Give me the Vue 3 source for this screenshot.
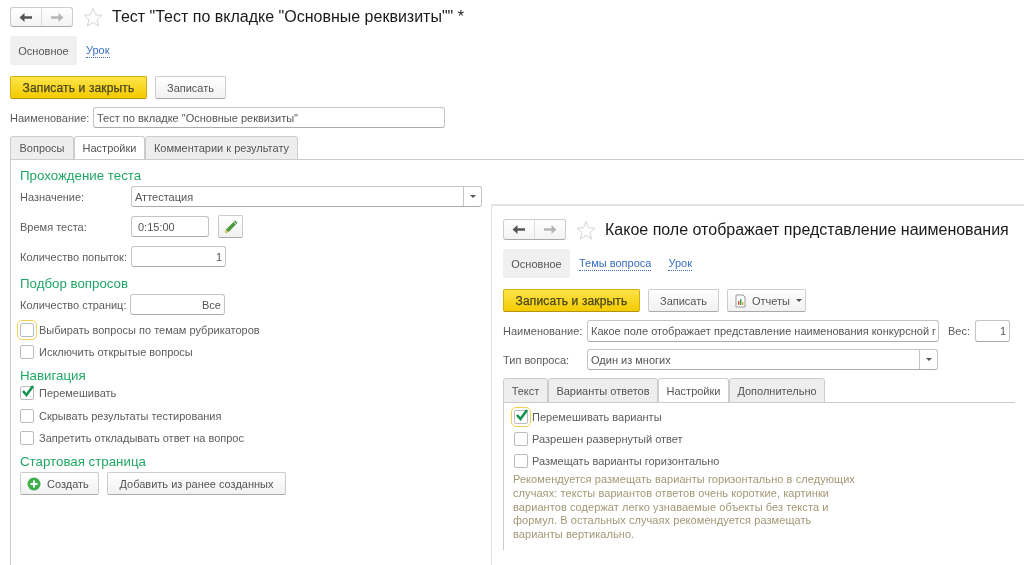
<script setup>
const Arrow = 'M0.5 5.5 5.5 1V4.3H13V6.7H5.5V10Z'
const Star = 'M10 1.5 12.5 7.8 19 8.2 14 12.5 15.7 19 10 15.4 4.3 19 6 12.5 1 8.2 7.5 7.8Z'
const leftChecks = ['Скрывать результаты тестирования', 'Запретить откладывать ответ на вопрос']
const note = ['Рекомендуется размещать варианты горизонтально в следующих', 'случаях: тексты вариантов ответов очень короткие, картинки', 'вариантов содержат легко узнаваемые объекты без текста и', 'формул. В остальных случаях рекомендуется размещать', 'варианты вертикально.']
</script>

<template>
  <div class="desk">
    <section class="win left">
      <header class="head">
        <div class="nav">
          <span class="nav-cell"><svg width="14" height="11" viewBox="0 0 14 11"><path :d="Arrow" fill="#555" /></svg></span>
          <span class="nav-cell"><svg class="flip" width="14" height="11" viewBox="0 0 14 11"><path :d="Arrow" fill="#b5b5b5" /></svg></span>
        </div>
        <svg class="star" width="20" height="20" viewBox="0 0 20 20"><path :d="Star" fill="#fff" stroke="#d4d4d4" /></svg>
        <h1 class="title">Тест "Тест по вкладке "Основные реквизиты"" *</h1>
      </header>
      <nav class="pages">
        <span class="page-cur">Основное</span>
        <a class="link">Урок</a>
      </nav>
      <div class="toolbar">
        <button class="btn primary w137">Записать и закрыть</button>
        <button class="btn w71">Записать</button>
      </div>
      <div class="row name-row">
        <label class="name-label">Наименование:</label>
        <div class="input w352">Тест по вкладке "Основные реквизиты"</div>
      </div>
      <div class="tabs">
        <span class="tab w64">Вопросы</span>
        <span class="tab on w71">Настройки</span>
        <span class="tab w153">Комментарии к результату</span>
      </div>
      <div class="panel">
        <h2 class="group">Прохождение теста</h2>
        <div class="row mt2"><label class="lab">Назначение:</label>
          <div class="input combo w351"><span class="combo-text">Аттестация</span><span class="drop"><i class="caret" /></span></div>
        </div>
        <div class="row mt9"><label class="lab">Время теста:</label>
          <div class="input w78 time">0:15:00</div>
          <button class="btn icon-btn">
            <svg width="16" height="16" viewBox="0 0 16 16"><path d="M2 14 3 10.5 10.5 3 13 5.5 5.5 13Z" fill="#4f9a3a" /><path d="M2 14 3 10.5 5.5 13Z" fill="#e8c65a" /><path d="M11 2.5 12 1.6 14.4 4 13.5 5Z" fill="#2f7d2a" /></svg>
          </button>
        </div>
        <div class="row mt9"><label class="lab">Количество попыток:</label><div class="input w95 num">1</div></div>
        <h2 class="group mt7">Подбор вопросов</h2>
        <div class="row mt2"><label class="lab narrow">Количество страниц:</label><div class="input w95 num">Все</div></div>
        <div class="checks mt5">
          <label class="check"><i class="box focus" />Выбирать вопросы по темам рубрикаторов</label>
          <label class="check"><i class="box" />Исключить открытые вопросы</label>
        </div>
        <h2 class="group mt4 mb-1">Навигация</h2>
        <div class="checks wide">
          <label class="check"><i class="box"><svg class="tick" width="16" height="15" viewBox="0 0 16 15"><path d="M3 7 6.5 11 13 2" fill="none" stroke="#12934f" stroke-width="2.6" /></svg></i>Перемешивать</label>
          <label v-for="c in leftChecks" :key="c" class="check"><i class="box" />{{ c }}</label>
        </div>
        <h2 class="group mt4">Стартовая страница</h2>
        <div class="actions">
          <button class="btn w79 create">
            <svg width="14" height="14" viewBox="0 0 14 14"><circle cx="7" cy="7" r="6.5" fill="#3fae4a" /><path d="M7 3.5V10.5M3.5 7H10.5" stroke="#fff" stroke-width="2" /></svg>
            Создать
          </button>
          <button class="btn w179">Добавить из ранее созданных</button>
        </div>
      </div>
    </section>

    <section class="win right">
      <header class="head tall">
        <div class="nav">
          <span class="nav-cell"><svg width="14" height="11" viewBox="0 0 14 11"><path :d="Arrow" fill="#555" /></svg></span>
          <span class="nav-cell"><svg class="flip" width="14" height="11" viewBox="0 0 14 11"><path :d="Arrow" fill="#b5b5b5" /></svg></span>
        </div>
        <svg class="star" width="20" height="20" viewBox="0 0 20 20"><path :d="Star" fill="#fff" stroke="#d4d4d4" /></svg>
        <h1 class="title">Какое поле отображает представление наименования</h1>
      </header>
      <nav class="pages">
        <span class="page-cur">Основное</span>
        <a class="link">Темы вопроса</a>
        <a class="link second">Урок</a>
      </nav>
      <div class="toolbar">
        <button class="btn primary w137">Записать и закрыть</button>
        <button class="btn w71">Записать</button>
        <button class="btn w79 reports">
          <svg width="13" height="14" viewBox="0 0 13 14"><path d="M2 1H9L11 3V13H2Z" fill="#fff" stroke="#999" /><path d="M4 11V7H5.4V11Z" fill="#d8503c" /><path d="M6 11V5H7.4V11Z" fill="#3fa24a" /><path d="M8 11V8H9.4V11Z" fill="#d8a83c" /></svg>
          Отчеты<i class="caret small" />
        </button>
      </div>
      <div class="row name-row r2">
        <label class="lab r-lab">Наименование:</label>
        <div class="input w352">Какое поле отображает представление наименования конкурсной г</div>
        <label class="weight">Вес:</label>
        <div class="input w35 num">1</div>
      </div>
      <div class="row mt7">
        <label class="lab r-lab">Тип вопроса:</label>
        <div class="input combo w351"><span class="combo-text">Один из многих</span><span class="drop"><i class="caret" /></span></div>
      </div>
      <div class="tabs r-tabs">
        <span class="tab w45">Текст</span>
        <span class="tab w110">Варианты ответов</span>
        <span class="tab on w71">Настройки</span>
        <span class="tab w96">Дополнительно</span>
      </div>
      <div class="panel r-panel">
        <div class="checks">
          <label class="check"><i class="box focus r-box"><svg class="tick" width="16" height="15" viewBox="0 0 16 15"><path d="M3 7 6.5 11 13 2" fill="none" stroke="#12934f" stroke-width="2.6" /></svg></i>Перемешивать варианты</label>
          <label class="check"><i class="box r-box" />Разрешен развернутый ответ</label>
          <label class="check"><i class="box r-box" />Размещать варианты горизонтально</label>
        </div>
        <p class="note"><span v-for="l in note" :key="l">{{ l }}</span></p>
      </div>
    </section>
  </div>
</template>

<style>
html, body { margin: 0; background: #fff; overflow: hidden; }
</style>

<style scoped>
.desk {
  position: relative; width: 1024px; height: 565px; overflow: hidden; background: #fff;
  font: 11px/14px "Liberation Sans", Arial, sans-serif; color: #555; filter: blur(.4px);
}
.win { display: flex; flex-direction: column; box-sizing: border-box; }
.left { height: 565px; padding: 7px 0 0 10px; }
.right {
  position: absolute; left: 491px; top: 204px; right: 0; bottom: 0; padding: 13px 0 0 11px;
  background: #fff; border-top: 2px solid #e2e2e2; border-left: 1px solid #e2e2e2;
}
.head { display: flex; align-items: center; height: 20px; }
.head.tall { height: 21px; }
.nav {
  display: flex; flex: none; width: 63px; height: 100%; box-sizing: border-box; border: 1px solid #ccc;
  border-bottom-color: #aaa; border-radius: 3px; background: linear-gradient(#fff, #f3f3f3);
}
.nav-cell { flex: 1; display: flex; align-items: center; justify-content: center; }
.nav-cell + .nav-cell { border-left: 1px solid #ddd; }
.flip { transform: scaleX(-1); }
.star { margin-left: 10px; flex: none; }
.title { margin: 0 0 0 9px; font-size: 16px; font-weight: 400; line-height: 20px; color: #1a1a1a; white-space: nowrap; }
.pages { display: flex; align-items: center; height: 29px; margin-top: 9px; }
.page-cur {
  display: flex; align-items: center; justify-content: center; width: 67px; height: 29px;
  background: #f0f0f0; border-radius: 2px; color: #555;
}
.link { margin-left: 9px; color: #3a6fc4; border-bottom: 1px dotted #3a6fc4; line-height: 13px; }
.link.second { margin-left: 17px; }
.toolbar { display: flex; gap: 8px; height: 23px; margin-top: 11px; }
.btn {
  box-sizing: border-box; height: 23px; padding: 0; border: 1px solid #ccc; border-bottom-color: #aaa;
  border-radius: 2px; background: linear-gradient(#fff, #f1f1f1); color: #555; font: inherit;
  display: flex; align-items: center; justify-content: center; gap: 8px; white-space: nowrap;
}
.primary {
  background: linear-gradient(#fce44a, #f4cb00); border-color: #d2ae10; border-bottom-color: #b39410;
  color: #4a4520; font-size: 12px; -webkit-text-stroke: .25px #4a4520; letter-spacing: .15px;
}
.w137 { width: 137px; } .w71 { width: 71px; } .w79 { width: 79px; } .w179 { width: 179px; }
.reports { justify-content: flex-start; padding-left: 6px; gap: 5px; }
.row { display: flex; align-items: center; height: 21px; }
.name-row { margin-top: 8px; }
.name-row.r2 { height: 22px; }
.name-label { width: 83px; flex: none; color: #5c5c5c; }
.lab { width: 111px; flex: none; color: #5c5c5c; white-space: nowrap; }
.lab.narrow { width: 110px; }
.lab.r-lab { width: 84px; }
.weight { margin-left: 9px; width: 27px; color: #5c5c5c; flex: none; }
.input {
  box-sizing: border-box; height: 100%; display: flex; align-items: center; padding: 0 3px;
  border: 1px solid #c4c4c4; border-bottom-color: #aaa; border-radius: 3px; background: #fff; color: #555; white-space: nowrap; flex: none;
}
.w352 { width: 352px; } .w351 { width: 351px; } .w78 { width: 78px; } .w95 { width: 95px; } .w35 { width: 35px; }
.time { padding-left: 6px; }
.num { justify-content: flex-end; }
.combo { padding-right: 0; }
.combo-text { flex: 1; }
.drop { width: 17px; height: 100%; border-left: 1px solid #c4c4c4; display: flex; align-items: center; justify-content: center; }
.caret { width: 0; height: 0; border: 3px solid transparent; border-top-color: #555; border-bottom: 0; }
.caret.small { margin-left: 1px; }
.icon-btn { width: 25px; margin-left: 9px; }
.tabs { display: flex; height: 24px; margin-top: 8px; }
.tab {
  box-sizing: border-box; display: flex; align-items: center; justify-content: center;
  background: #eee; border: 1px solid #ccc; border-radius: 3px 3px 0 0; color: #555;
}
.tab.on { background: #fff; border-bottom-color: #fff; }
.w64 { width: 64px; } .w153 { width: 153px; } .w45 { width: 45px; } .w110 { width: 110px; } .w96 { width: 96px; }
.panel { flex: 1; border-left: 1px solid #ccc; border-top: 1px solid #ccc; padding: 6px 0 0 9px; margin-top: -1px; }
.group { margin: 0; font-size: 13.3px; font-weight: 400; line-height: 20px; height: 18px; color: #21a765; }
.mt2 { margin-top: 2px; } .mt4 { margin-top: 4px; } .mt5 { margin-top: 5px; } .mt7 { margin-top: 7px; } .mt9 { margin-top: 9px; }
.mb-1 { margin-bottom: -1px; }
.checks { display: flex; flex-direction: column; gap: 2px; }
.checks.wide { gap: 2.5px; }
.check { display: flex; align-items: center; height: 20px; color: #5c5c5c; white-space: nowrap; }
.box {
  position: relative; width: 12px; height: 12px; margin-right: 5px; flex: none;
  border: 1px solid #bbb; border-radius: 2px; background: #fff;
}
.box.r-box { margin-right: 4px; }
.box.focus { outline: 1px solid #f3cf55; outline-offset: 2px; }
.tick { position: absolute; left: -1px; top: -3px; }
.actions { display: flex; gap: 8px; margin-top: 2px; }
.create { justify-content: flex-start; padding-left: 6px; gap: 6px; }
.r-tabs { height: 25px; }
.r-panel { flex: none; height: 148px; width: 512px; padding: 4px 0 0 10px; box-sizing: border-box; }
.note { margin: 2px 0 0 -1px; color: #a39775; display: flex; flex-direction: column; white-space: nowrap; line-height: 13.75px; letter-spacing: .07px; }
</style>
